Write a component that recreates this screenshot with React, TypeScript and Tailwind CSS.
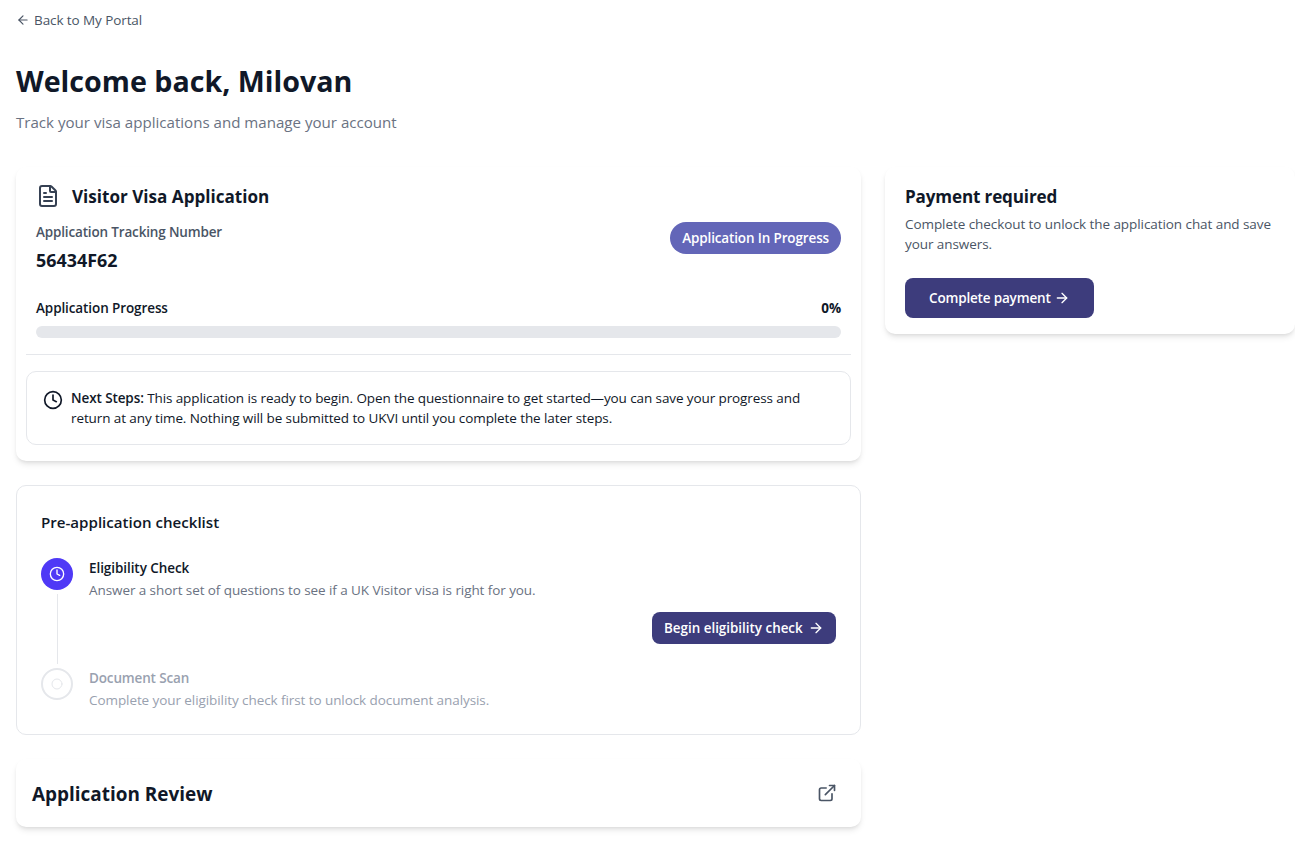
import React from 'react';
import { ArrowLeft, ArrowRight, Circle, Clock, ExternalLink, FileText } from 'lucide-react';

function ApplicationCard() {
  return (
    <section className="rounded-[10px] bg-white shadow-md px-2.5 py-4">
      <div className="px-2.5">
        <div className="flex h-[26px] items-center gap-3">
          <FileText className="h-6 w-6 text-gray-700" />
          <h2 className="pt-px text-[17.1px] leading-7 font-bold text-gray-900">Visitor Visa Application</h2>
        </div>

        <div className="mt-[13px] flex items-start justify-between">
          <div>
            <p className="text-[13.5px] leading-5 font-semibold tracking-[-0.16px] text-gray-600">Application Tracking Number</p>
            <p className="mt-1 text-[17.9px] leading-7 font-bold text-gray-900">56434F62</p>
          </div>
          <span className="flex h-8 items-center rounded-full bg-[#6366b8] px-3 text-[13.5px] font-semibold tracking-[-0.14px] text-white">
            Application In Progress
          </span>
        </div>

        <div className="mt-6 flex justify-between text-[13.5px] leading-5 tracking-[-0.1px] text-gray-900">
          <span className="font-semibold">Application Progress</span>
          <span className="font-bold">0%</span>
        </div>
        <div className="mt-2 h-3 rounded-full bg-gray-200" />
      </div>

      <div className="mt-4 border-t border-gray-200 pt-4">
        <div className="flex items-start gap-2 rounded-[10px] border border-gray-200 p-4">
          <Clock className="mt-0.5 h-5 w-5 shrink-0 text-gray-900" />
          <p className="text-[13.5px] leading-5 tracking-[-0.1px] text-gray-900">
            <span className="font-semibold">Next Steps:</span> This application is ready to begin. Open the
            questionnaire to get started—you can save your progress and
            <br />
            return at any time. Nothing will be submitted to UKVI until you complete the later steps.
          </p>
        </div>
      </div>
    </section>
  );
}

function ChecklistCard() {
  return (
    <section className="rounded-[10px] border border-gray-200 bg-white p-6">
      <h2 className="text-[15.1px] leading-6 font-semibold text-gray-900">Pre-application checklist</h2>

      <div className="mt-6 flex gap-4">
        <div className="flex flex-col items-center">
          <div className="flex h-8 w-8 items-center justify-center rounded-full bg-indigo-600 text-white">
            <Clock className="h-4 w-4" />
          </div>
          <div className="my-1 w-px flex-1 bg-gray-200" />
        </div>
        <div className="flex-1 pb-6">
          <h3 className="text-[13.5px] leading-5 font-semibold tracking-[-0.07px] text-gray-900">Eligibility Check</h3>
          <p className="mt-0.5 text-[13.5px] leading-5 tracking-[-0.08px] text-gray-500">
            Answer a short set of questions to see if a UK Visitor visa is right for you.
          </p>
          <div className="mt-3 flex justify-end">
            <button className="flex h-8 w-[184px] items-center justify-between rounded-lg bg-[#3d3c7c] px-3 text-[13.4px] font-semibold text-white">
              Begin eligibility check
              <ArrowRight className="h-4 w-4 shrink-0" />
            </button>
          </div>
        </div>
      </div>

      <div className="flex gap-4">
        <div className="flex h-8 w-8 items-center justify-center rounded-full border-2 border-gray-200 text-gray-200">
          <Circle className="h-3 w-3" />
        </div>
        <div className="flex-1">
          <h3 className="text-[13.5px] leading-5 font-semibold tracking-[-0.15px] text-gray-400">Document Scan</h3>
          <p className="mt-0.5 text-[13.5px] leading-5 tracking-[-0.08px] text-gray-400">
            Complete your eligibility check first to unlock document analysis.
          </p>
        </div>
      </div>
    </section>
  );
}

function PaymentCard() {
  return (
    <section className="rounded-[10px] bg-white shadow-md px-5 py-4">
      <h2 className="text-[17.1px] leading-7 font-bold tracking-[-0.15px] text-gray-900">Payment required</h2>
      <p className="mt-[3px] text-[13.5px] leading-5 tracking-[-0.07px] text-gray-600">
        Complete checkout to unlock the application chat and save
        <br />
        your answers.
      </p>
      <button className="mt-6 flex h-10 w-[189px] items-center justify-between rounded-lg bg-[#3d3c7c] px-6 text-[13.5px] font-semibold tracking-[-0.17px] text-white">
        Complete payment
        <ArrowRight className="h-4 w-4 shrink-0" />
      </button>
    </section>
  );
}

export default function App() {
  return (
    <div className="h-[841px] overflow-hidden bg-white pl-4 pt-2.5 font-['Open_Sans','Noto_Sans',sans-serif] whitespace-nowrap">
      <a href="#" className="flex items-center gap-1 text-[13.5px] leading-5 tracking-[-0.09px] text-gray-600">
        <ArrowLeft className="h-3.5 w-3.5" />
        Back to My Portal
      </a>

      <header className="mt-[33px]">
        <h1 className="text-[28.65px] leading-9 font-bold text-gray-900">Welcome back, Milovan</h1>
        <p className="mt-[11px] text-[15.1px] leading-6 text-gray-500">
          Track your visa applications and manage your account
        </p>
      </header>

      <main className="mt-[33px] grid grid-cols-[845px_410px] items-start gap-6">
        <div className="space-y-6">
          <ApplicationCard />
          <ChecklistCard />
          <section className="flex h-[68px] items-center justify-between rounded-[10px] bg-white pl-4 pr-6 shadow-md">
            <h2 className="pt-px text-[18.95px] leading-7 font-bold text-gray-900">Application Review</h2>
            <ExternalLink className="h-5 w-5 text-gray-600" />
          </section>
        </div>
        <PaymentCard />
      </main>
    </div>
  );
}
